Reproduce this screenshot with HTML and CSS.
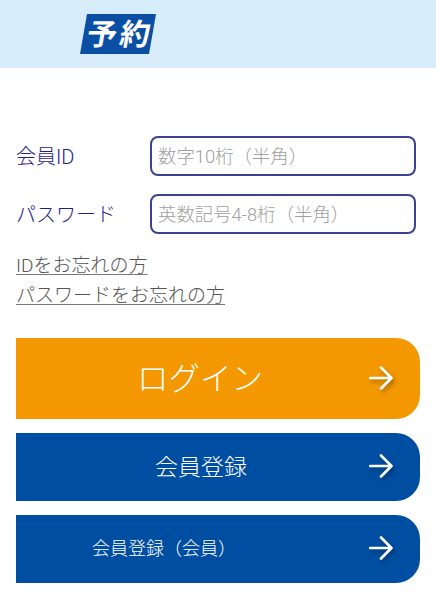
FILE: index.html
```html
<!DOCTYPE html>
<html lang="ja">
<head>
<meta charset="utf-8">
<title>予約</title>
<link rel="stylesheet" href="styles.css">
</head>
<body>
<header class="header">
  <div class="logo"><span class="logo-text">予約</span></div>
</header>
<main class="main">
  <form class="form">
    <div class="row">
      <label class="label" for="id">会員ID</label>
      <input class="input" id="id" type="text" placeholder="数字10桁（半角）">
    </div>
    <div class="row">
      <label class="label" for="pw">パスワード</label>
      <input class="input" id="pw" type="text" placeholder="英数記号4-8桁（半角）">
    </div>
  </form>
  <nav class="links">
    <a class="link" href="#">IDをお忘れの方</a>
    <a class="link" href="#">パスワードをお忘れの方</a>
  </nav>
  <div class="buttons">
    <a class="btn btn-login" href="#">
      <span class="btn-text">ログイン</span>
      <svg class="arrow" viewBox="0 0 24 24"><path d="M1 12H22.5M12 1.5L22.5 12L12 22.5"/></svg>
    </a>
    <a class="btn btn-reg" href="#">
      <span class="btn-text">会員登録</span>
      <svg class="arrow" viewBox="0 0 24 24"><path d="M1 12H22.5M12 1.5L22.5 12L12 22.5"/></svg>
    </a>
    <a class="btn btn-sub" href="#">
      <span class="btn-text">会員登録（会員）</span>
      <svg class="arrow" viewBox="0 0 24 24"><path d="M1 12H22.5M12 1.5L22.5 12L12 22.5"/></svg>
    </a>
  </div>
</main>
</body>
</html>
```
FILE: styles.css
```css
* { box-sizing: border-box; }
html, body { margin: 0; padding: 0; }
body {
  width: 436px;
  height: 599px;
  overflow: hidden;
  background: #fff;
  font-family: Roboto, "Noto Sans CJK JP", sans-serif;
  font-weight: 300;
}
.header {
  height: 68px;
  background: #d7edf9;
  padding: 14px 0 0 80px;
}
.logo {
  width: 76px;
  height: 40px;
  padding: 2px 0 0 4px;
  background: #0a4fa3;
  clip-path: polygon(7px 0, 100% 0, calc(100% - 7px) 100%, 0 100%);
  display: flex;
  align-items: center;
  justify-content: center;
}
.logo-text {
  color: #fff;
  font-size: 30px;
  font-weight: 700;
  line-height: 38px;
  letter-spacing: 3px;
  white-space: nowrap;
  transform: skewX(-10deg);
}
.main { padding: 68px 16px 0; }
.form { display: flex; flex-direction: column; gap: 18px; }
.row { display: flex; align-items: center; height: 40px; }
.label {
  width: 134px;
  padding-top: 2px;
  color: #1d2088;
  font-size: 20px;
  line-height: 38px;
}
.input {
  width: 266px;
  height: 40px;
  border: 2px solid #3d4191;
  border-radius: 8px;
  padding: 0 6px;
  background: #fff;
  font-family: inherit;
  font-weight: 300;
  font-size: 18.4px;
  outline: none;
}
.input::placeholder { color: #a0a0a0; opacity: 1; }
.links { display: flex; flex-direction: column; margin-top: 17px; }
.link {
  width: max-content;
  color: #555;
  font-size: 19px;
  line-height: 30px;
  height: 30px;
  text-decoration: underline;
  text-decoration-color: #777;
  text-underline-offset: 2px;
}
.buttons { display: flex; flex-direction: column; gap: 14px; margin-top: 27px; width: 404px; }
.btn {
  display: flex;
  align-items: center;
  height: 68px;
  border-radius: 0 24px 24px 0;
  background: #004ea2;
  color: #fff;
  text-decoration: none;
  position: relative;
}
.btn-login { height: 81px; background: #f39800; }
.btn-text { display: block; text-align: center; padding-bottom: 4px; }
.btn-login .btn-text { font-size: 31.5px; width: 368px; padding-bottom: 6px; }
.btn-reg .btn-text { font-size: 23px; width: 370px; }
.btn-sub .btn-text { font-size: 18px; width: 296px; }
.arrow {
  position: absolute;
  right: 27px;
  top: 50%;
  width: 24px;
  height: 24px;
  margin-top: -13px;
  fill: none;
  stroke: #fff;
  stroke-width: 2.6;
  stroke-linecap: round;
  stroke-linejoin: round;
  filter: drop-shadow(2px 3px 2px rgba(0,0,0,.3));
}
```
